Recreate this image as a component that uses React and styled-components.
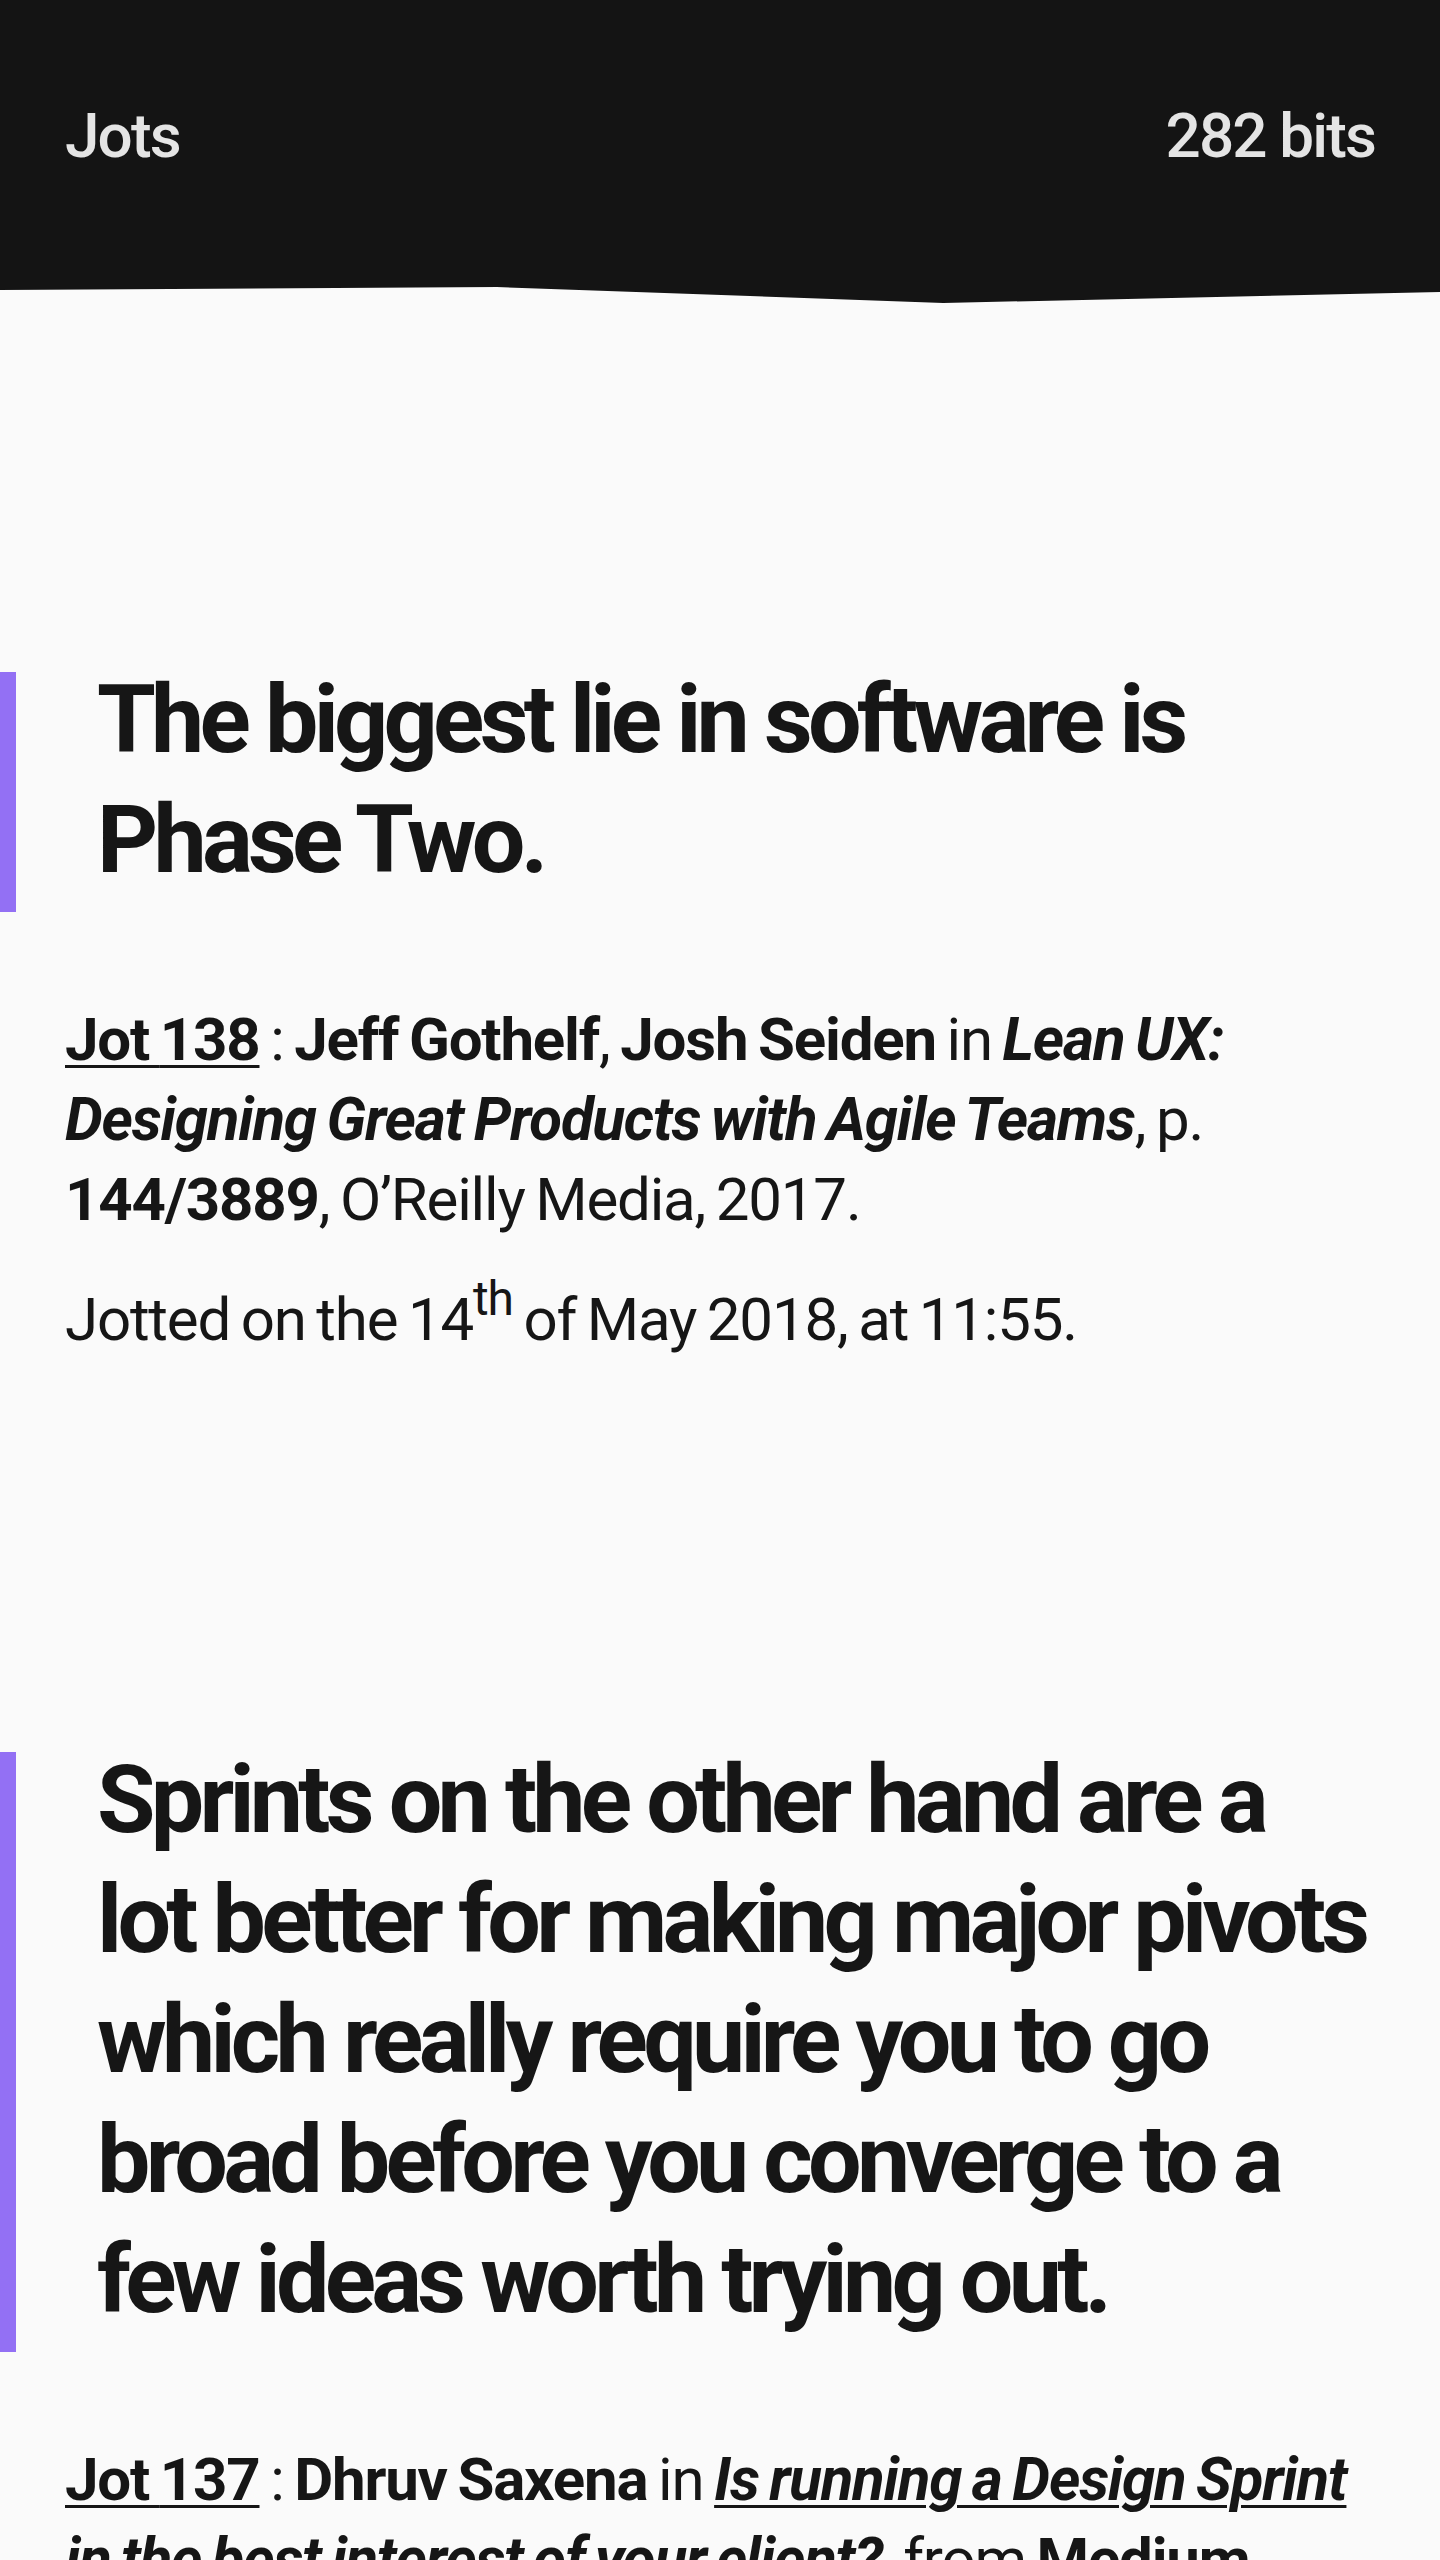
import styled, { createGlobalStyle } from 'styled-components';

const GlobalStyle = createGlobalStyle`
  html, body {
    margin: 0;
    background: #fafafa;
  }
  body {
    font-family: Roboto, "Liberation Sans", sans-serif;
    color: #161616;
    -webkit-font-smoothing: antialiased;
  }
  a {
    color: inherit;
  }
`;

const Header = styled.header`
  height: 303px;
  box-sizing: border-box;
  padding: 105px 65px 0;
  display: flex;
  justify-content: space-between;
  align-items: flex-start;
  background: #141414;
  color: #e4e4e4;
  font-size: 62px;
  line-height: 1;
  font-weight: 500;
  letter-spacing: -0.03em;
  clip-path: polygon(0 0, 100% 0, 100% 292px, 65.5% 303px, 34.5% 287px, 0 290px);
`;

const Brand = styled.a`
  text-decoration: none;
`;

const Main = styled.main`
  display: flex;
  flex-direction: column;
  gap: 392px;
  padding-top: 369px;
`;

const Jot = styled.article`
  display: flex;
  flex-direction: column;
`;

const Quote = styled.blockquote`
  margin: 0 0 88px;
  padding: 0 40px 12px 81px;
  display: flex;
  border-left: 16px solid #9370f4;
`;

const QuoteText = styled.h2`
  margin: -12px 0 0;
  font-size: 95px;
  line-height: 120px;
  font-weight: 700;
  letter-spacing: -0.05em;
`;

// the quotes keep the line breaks of the original layout
const QuoteLine = styled.span`
  display: block;
  white-space: nowrap;
`;

const Meta = styled.p`
  margin: ${({ $gap }) => ($gap ? '40px' : '0')} 0 0;
  padding: 0 65px;
  font-size: 60px;
  line-height: 80px;
  font-weight: 400;
  letter-spacing: -0.02em;
  word-spacing: -3px;

  b {
    font-weight: 700;
  }
  sup {
    font-size: 0.8em;
    line-height: 0;
    vertical-align: 25px;
  }
`;

const JotLink = styled.a`
  font-weight: 700;
  text-decoration: underline;
  text-decoration-thickness: 3px;
  text-underline-offset: 5px;
`;

const Source = styled.i`
  font-weight: 700;
`;

const SourceLink = styled.a`
  font-style: italic;
  font-weight: 700;
  text-decoration: underline;
  text-decoration-thickness: 3px;
  text-underline-offset: 5px;
`;

const jots = [
  {
    id: 138,
    quote: ['The biggest lie in software is', 'Phase Two.'],
    cite: (
      <>
        <b>Jeff Gothelf</b>, <b>Josh Seiden</b> in{' '}
        <Source>Lean UX: Designing Great Products with Agile Teams</Source>, p.{' '}
        <b>144/3889</b>, O’Reilly Media, 2017.
      </>
    ),
    day: '14',
    rest: 'of May 2018, at 11:55.',
  },
  {
    id: 137,
    quote: [
      'Sprints on the other hand are a',
      'lot better for making major pivots',
      'which really require you to go',
      'broad before you converge to a',
      'few ideas worth trying out.',
    ],
    cite: (
      <>
        <b>Dhruv Saxena</b> in{' '}
        <SourceLink href="#">
          Is running a Design Sprint in the best interest of your client?
        </SourceLink>
        , from <b>Medium</b>, 2018.
      </>
    ),
    day: '14',
    rest: 'of May 2018, at 11:52.',
  },
];

export default function App() {
  return (
    <>
      <GlobalStyle />
      <Header>
        <Brand href="#">Jots</Brand>
        <span>282 bits</span>
      </Header>
      <Main>
        {jots.map((jot) => (
          <Jot key={jot.id}>
            <Quote>
              <QuoteText>
                {jot.quote.map((line) => (
                  <QuoteLine key={line}>{line}</QuoteLine>
                ))}
              </QuoteText>
            </Quote>
            <Meta>
              <JotLink href="#">Jot {jot.id}</JotLink> : {jot.cite}
            </Meta>
            <Meta $gap>
              Jotted on the {jot.day}
              <sup>th</sup> {jot.rest}
            </Meta>
          </Jot>
        ))}
      </Main>
    </>
  );
}
